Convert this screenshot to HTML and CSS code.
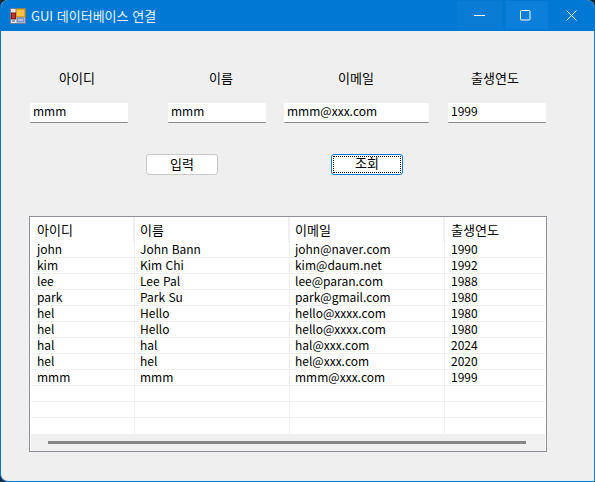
FILE: index.html
```html
<!DOCTYPE html>
<html lang="ko">
<head>
    <meta charset="UTF-8">
    <title>GUI 데이터베이스 연결</title>
    <link rel="stylesheet" href="styles.css">
</head>
<body>
    <div class="window">
        <div class="titlebar">
            <svg class="app-icon" width="16" height="16" viewBox="0 0 16 16">
                <rect x="0.5" y="0.5" width="15" height="15" fill="#e8edf5" stroke="#6d7d99"/>
                <rect x="6" y="1" width="9" height="8" fill="#f6c445" stroke="#b8801c"/>
                <rect x="1.5" y="5" width="4" height="6" fill="#c8301f" stroke="#7c1c14"/>
                <rect x="7" y="10" width="7" height="4" fill="#a9bde6" stroke="#5f78ad"/>
                <rect x="2" y="12" width="3" height="2" fill="#8fa3c9"/>
            </svg>
            <span class="title">GUI 데이터베이스 연결</span>
            <div class="controls">
                <div class="ctl ctl-min"><svg width="11" height="11" viewBox="0 0 11 11"><path d="M0 5.5h11" stroke="#fff"/></svg></div>
                <div class="ctl ctl-max"><svg width="11" height="11" viewBox="0 0 11 11"><rect x="0.5" y="0.5" width="9.5" height="9.5" rx="1" fill="none" stroke="#fff"/></svg></div>
                <div class="ctl ctl-close"><svg width="11" height="11" viewBox="0 0 11 11"><path d="M0.5 0.5l10 10M10.5 0.5l-10 10" stroke="#fff"/></svg></div>
            </div>
        </div>
        <div class="content">
            <div class="labels">
                <span class="lbl lbl-id">아이디</span>
                <span class="lbl lbl-name">이름</span>
                <span class="lbl lbl-mail">이메일</span>
                <span class="lbl">출생연도</span>
            </div>
            <div class="inputs">
                <input class="field field-id" type="text" value="mmm">
                <input class="field field-name" type="text" value="mmm">
                <input class="field field-mail" type="text" value="mmm@xxx.com">
                <input class="field field-year" type="text" value="1999">
            </div>
            <div class="buttons">
                <button class="btn">입력</button>
                <button class="btn btn-focus"><span>조회</span></button>
            </div>
            <div class="grid-box">
                <table class="grid">
                    <thead>
                        <tr><th>아이디</th><th>이름</th><th>이메일</th><th>출생연도</th></tr>
                    </thead>
                    <tbody>
                        <tr><td>john</td><td>John Bann</td><td>john@naver.com</td><td>1990</td></tr>
                        <tr><td>kim</td><td>Kim Chi</td><td>kim@daum.net</td><td>1992</td></tr>
                        <tr><td>lee</td><td>Lee Pal</td><td>lee@paran.com</td><td>1988</td></tr>
                        <tr><td>park</td><td>Park Su</td><td>park@gmail.com</td><td>1980</td></tr>
                        <tr><td>hel</td><td>Hello</td><td>hello@xxxx.com</td><td>1980</td></tr>
                        <tr><td>hel</td><td>Hello</td><td>hello@xxxx.com</td><td>1980</td></tr>
                        <tr><td>hal</td><td>hal</td><td>hal@xxx.com</td><td>2024</td></tr>
                        <tr><td>hel</td><td>hel</td><td>hel@xxx.com</td><td>2020</td></tr>
                        <tr><td>mmm</td><td>mmm</td><td>mmm@xxx.com</td><td>1999</td></tr>
                        <tr><td></td><td></td><td></td><td></td></tr>
                        <tr><td></td><td></td><td></td><td></td></tr>
                        <tr class="row-last"><td></td><td></td><td></td><td></td></tr>
                    </tbody>
                </table>
                <div class="scrollbar"><div class="thumb"></div></div>
            </div>
        </div>
    </div>
</body>
</html>
```

FILE: styles.css
```css
html, body { margin: 0; padding: 0; background: #1d2a38; }
body { font-family: "Noto Sans CJK KR", "Liberation Sans", sans-serif; font-size: 12px; color: #000; }

.window { width: 595px; height: 482px; box-sizing: border-box; border: 1px solid #0078d4; border-top: 0; border-radius: 8px 8px 0 8px; overflow: hidden; background: #efefef; }

.titlebar { height: 31px; background: #0078d4; display: flex; align-items: center; color: #fff; }
.app-icon { margin-left: 9px; flex: none; }
.title { margin-left: 5px; font-size: 13px; color: #e6f2fb; }
.controls { margin-left: auto; display: flex; height: 28px; align-self: flex-start; margin-top: 1px; }
.ctl { display: flex; align-items: center; justify-content: center; }
.ctl-min { width: 45px; background: #0a7cd6; margin-right: 4px; }
.ctl-max { width: 42px; box-sizing: border-box; padding-right: 4px; background: #0b7fd9; }
.ctl-close { width: 46px; }

.content { padding: 0 0 0 29px; }

.labels { display: flex; margin: 38px 0 0 0; height: 18px; line-height: 18px; font-size: 13px; }
.lbl { display: block; white-space: nowrap; }
.lbl-id { width: 150px; margin-left: 29px; }
.lbl-name { width: 129px; }
.lbl-mail { width: 133px; }

.inputs { display: flex; margin-top: 16px; }
.field { display: block; height: 20px; box-sizing: border-box; border: 0; border-bottom: 1px solid #8a8a8a; background: #fff; padding: 0 0 5px 3px; font: inherit; font-size: 12px; color: #000; outline: 0; border-radius: 1px; }
.field-id { width: 98px; }
.field-name { width: 98px; margin-left: 40px; }
.field-mail { width: 145px; margin-left: 18px; }
.field-year { width: 98px; margin-left: 19px; }

.buttons { display: flex; margin-top: 31px; margin-left: 116px; }
.btn { display: block; width: 72px; height: 21px; box-sizing: border-box; padding: 0 0 4px; background: #fff; border: 1px solid #c8c8c8; border-radius: 3px; font: inherit; font-size: 13px; color: #000; line-height: 17px; }
.btn-focus { margin-left: 113px; border: 1px solid #0078d4; padding: 1px; }
.btn-focus span { display: block; height: 17px; box-sizing: border-box; line-height: 12px; border: 1px dotted #000; }

.grid-box { width: 518px; height: 236px; box-sizing: border-box; margin-top: 41px; margin-left: -1px; border: 1px solid #8a8f98; background: #fff; }

.grid { border-collapse: separate; border-spacing: 0; table-layout: fixed; width: 514px; margin-left: 1px; background: #fff; }
.grid th, .grid td { width: 155px; padding: 0 0 0 5px; box-sizing: border-box; text-align: left; font-weight: normal; white-space: nowrap; }
.grid th:first-child, .grid td:first-child { width: 104px; padding-left: 6px; }
.grid th:last-child, .grid td:last-child { width: 100px; padding-left: 6px; }
.grid th { height: 25px; font-size: 13px; line-height: 24px; border-right: 2px solid #efefef; }
.grid th:last-child { border-right: 0; }
.grid td { height: 16px; line-height: 14px; vertical-align: top; border-right: 1px solid #efefef; border-bottom: 1px solid #efefef; }
.grid td:last-child { border-right: 0; }
.grid .row-last td { border-bottom-color: #fff; }

.scrollbar { height: 17px; margin-left: 1px; width: 514px; background: #f0f0f0; display: flex; align-items: center; }
.thumb { width: 478px; height: 3px; margin-left: 17px; background: #858585; }
```
